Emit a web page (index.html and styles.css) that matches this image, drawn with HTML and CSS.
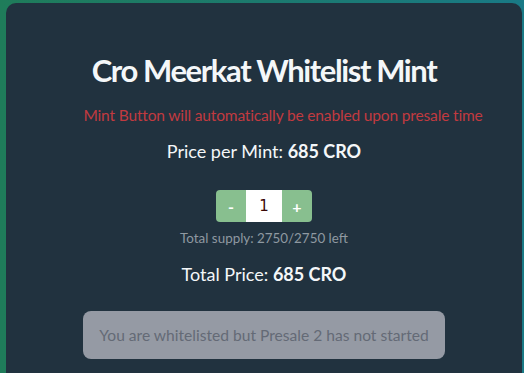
FILE: index.html
```html
<!DOCTYPE html>
<html>
<head>
<meta charset="utf-8">
<link rel="stylesheet" href="styles.css">
</head>
<body>
<div class="card">
  <h1 class="title">Cro Meerkat Whitelist Mint</h1>
  <p class="notice">Mint Button will automatically be enabled upon presale time</p>
  <p class="price">Price per Mint: <b>685 CRO</b></p>
  <div class="counter">
    <button class="step">-</button>
    <input class="qty" type="text" value="1">
    <button class="step">+</button>
  </div>
  <p class="supply">Total supply: 2750/2750 left</p>
  <p class="total">Total Price: <b>685 CRO</b></p>
  <button class="mint" disabled>You are whitelisted but Presale 2 has not started</button>
</div>
</body>
</html>
```
FILE: styles.css
```css
html, body {
  margin: 0;
  height: 100%;
}
body {
  background: linear-gradient(90deg, #1f7c5a 0%, #1c7a6e 50%, #197a86 100%);
  padding: 3px 2px 0 6px;
  box-sizing: border-box;
  font-family: Lato, "Noto Sans", sans-serif;
  overflow: hidden;
}
.card {
  background: #21323f;
  border-radius: 10px 10px 0 0;
  height: 100%;
  padding-top: 47px;
  box-sizing: border-box;
  display: flex;
  flex-direction: column;
  align-items: center;
  color: #f4f7f9;
}
.title {
  margin: 0;
  font-size: 31px;
  letter-spacing: -1.4px;
  line-height: 40px;
  font-weight: 700;
}
.notice {
  margin: 15px 0 0;
  padding-left: 38px;
  font-size: 15.5px;
  letter-spacing: -0.15px;
  line-height: 20px;
  color: #c23a3f;
}
.price, .total {
  margin: 14px 0 0;
  font-size: 18px;
  line-height: 24px;
}
.price b, .total b {
  font-weight: 700;
}
.counter {
  margin-top: 27px;
  display: flex;
  height: 32px;
}
.step {
  width: 30px;
  height: 32px;
  border: 0;
  padding: 0;
  background: #88bf8f;
  color: #fff;
  font-family: Lato, sans-serif;
  font-weight: 700;
  font-size: 16px;
}
.step:first-child {
  border-radius: 4px 0 0 4px;
}
.step:last-child {
  border-radius: 0 4px 4px 0;
}
.qty {
  width: 36px;
  height: 32px;
  border: 0;
  padding: 0;
  margin: 0;
  box-sizing: border-box;
  text-align: center;
  font-family: "DejaVu Sans", sans-serif;
  font-size: 15px;
  color: #3a0808;
  background: #fff;
  outline: none;
}
.supply {
  margin: 7px 0 0;
  font-size: 13.4px;
  line-height: 18px;
  color: #8f99a1;
}
.total {
  margin-top: 15px;
}
.mint {
  margin-top: 25px;
  width: 362px;
  height: 48px;
  border: 0;
  border-radius: 8px;
  background: #959aa4;
  color: #646a76;
  font-family: Lato, "Noto Sans", sans-serif;
  font-size: 15.6px;
  padding: 0;
}
```
